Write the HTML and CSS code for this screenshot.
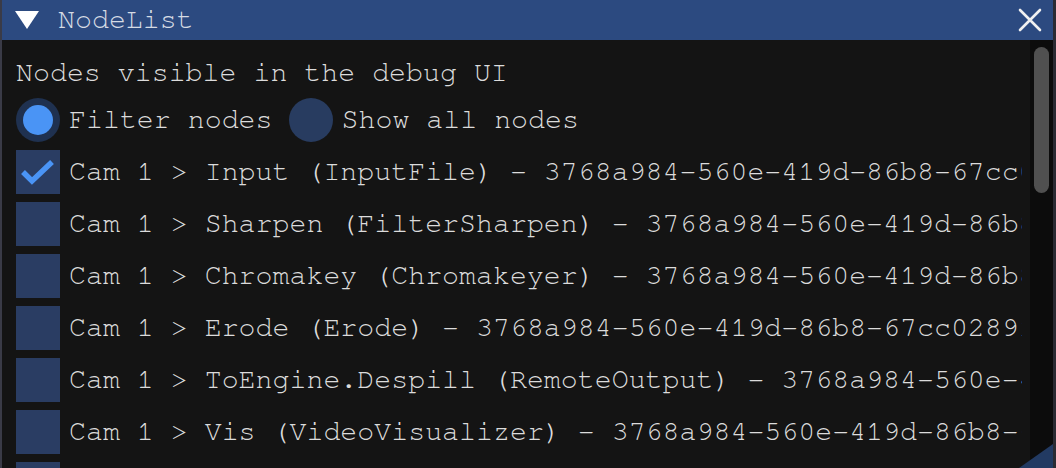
FILE: index.html
```html
<!DOCTYPE html>
<html>
<head>
<meta charset="utf-8">
<link rel="stylesheet" href="styles.css">
</head>
<body>
<div class="window">
  <div class="titlebar">
    <svg class="collapse" width="26" height="20" viewBox="0 0 26 20"><polygon points="1,1 25,1 13,19" fill="#ffffff"/></svg>
    <span class="title">NodeList</span>
    <svg class="close" width="24" height="24" viewBox="0 0 24 24"><path d="M2 2 L22 22 M22 2 L2 22" stroke="#f0f0f0" stroke-width="2.6" stroke-linecap="round"/></svg>
  </div>
  <div class="body">
    <div class="content">
      <div class="line">Nodes visible in the debug UI</div>
      <div class="row">
        <span class="radio on"><span class="dot"></span></span>
        <span class="label">Filter nodes</span>
        <span class="radio second"></span>
        <span class="label">Show all nodes</span>
      </div>
      <div class="row">
        <span class="check"><svg width="44" height="44" viewBox="0 0 44 44"><path d="M7 22 L16 31 L36 12" fill="none" stroke="#4a94f5" stroke-width="5.5" stroke-linejoin="miter"/></svg></span>
        <span class="label">Cam 1 &gt; Input (InputFile) - 3768a984-560e-419d-86b8-67cc02891a2b</span>
      </div>
      <div class="row">
        <span class="check"></span>
        <span class="label">Cam 1 &gt; Sharpen (FilterSharpen) - 3768a984-560e-419d-86b8-67cc02891a2b</span>
      </div>
      <div class="row">
        <span class="check"></span>
        <span class="label">Cam 1 &gt; Chromakey (Chromakeyer) - 3768a984-560e-419d-86b8-67cc02891a2b</span>
      </div>
      <div class="row">
        <span class="check"></span>
        <span class="label">Cam 1 &gt; Erode (Erode) - 3768a984-560e-419d-86b8-67cc02891a2b</span>
      </div>
      <div class="row">
        <span class="check"></span>
        <span class="label">Cam 1 &gt; ToEngine.Despill (RemoteOutput) - 3768a984-560e-419d-86b8-67cc02891a2b</span>
      </div>
      <div class="row">
        <span class="check"></span>
        <span class="label">Cam 1 &gt; Vis (VideoVisualizer) - 3768a984-560e-419d-86b8-67cc02891a2b</span>
      </div>
      <div class="row">
        <span class="check"></span>
        <span class="label">Cam 1 &gt; Output (OutputFile) - 3768a984-560e-419d-86b8-67cc02891a2b</span>
      </div>
    </div>
    <div class="scrollbar"><div class="thumb"></div></div>
  </div>
  <div class="grip"></div>
</div>
</body>
</html>
```

FILE: styles.css
```css
* { box-sizing: border-box; }
html, body {
  margin: 0;
  padding: 0;
  width: 1056px;
  height: 468px;
  overflow: hidden;
  background: #141414;
}
.window {
  position: relative;
  width: 1056px;
  height: 468px;
  display: flex;
  flex-direction: column;
  background: #141414;
  border-left: 2px solid #3a3b47;
  border-right: 3px solid #2a2b33;
  font-family: "Nimbus Mono PS", "Nimbus Mono L", "FreeMono", "Courier 10 Pitch", "Liberation Mono", monospace;
  font-size: 28.27px;
  color: #dcdcdc;
  overflow: hidden;
}
.titlebar {
  height: 40px;
  flex: none;
  background: #2c4a80;
  display: flex;
  align-items: center;
  padding-left: 12px;
  padding-right: 11px;
}
.collapse { flex: none; }
.title {
  margin-left: 18px;
  color: #d6dbe4;
  flex: 1;
  line-height: 32px;
}
.close { flex: none; }
.body {
  flex: 1;
  display: flex;
  min-height: 0;
}
.content {
  flex: 1;
  min-width: 0;
  overflow: hidden;
  padding: 16px 0 0 14px;
  margin-right: 8px;
  display: flex;
  flex-direction: column;
  gap: 8px;
}
.line {
  height: 34px;
  line-height: 34px;
  white-space: nowrap;
  flex: none;
}
.row {
  height: 44px;
  flex: none;
  display: flex;
  align-items: center;
  white-space: nowrap;
}
.label {
  margin-left: 9px;
  line-height: 32px;
  white-space: nowrap;
}
.radio {
  width: 44px;
  height: 44px;
  border-radius: 50%;
  background: #283c60;
  flex: none;
  display: flex;
  align-items: center;
  justify-content: center;
}
.radio.on { background: #1f3150; }
.radio.second { margin-left: 16px; }
.dot {
  width: 30px;
  height: 30px;
  border-radius: 50%;
  background: #4a94f5;
}
.check {
  width: 44px;
  height: 44px;
  flex: none;
  background: #2a3d63;
  display: block;
}
.check svg { display: block; }
.scrollbar {
  width: 23px;
  flex: none;
  background: #0c0c0c;
  padding: 7px 4px 0 4px;
}
.thumb {
  height: 146px;
  border-radius: 8px;
  background: #505050;
}
.grip {
  position: absolute;
  right: 0;
  bottom: 0;
  width: 34px;
  height: 24px;
  background: #223a62;
  clip-path: polygon(100% 0, 100% 100%, 0 100%);
}
```
